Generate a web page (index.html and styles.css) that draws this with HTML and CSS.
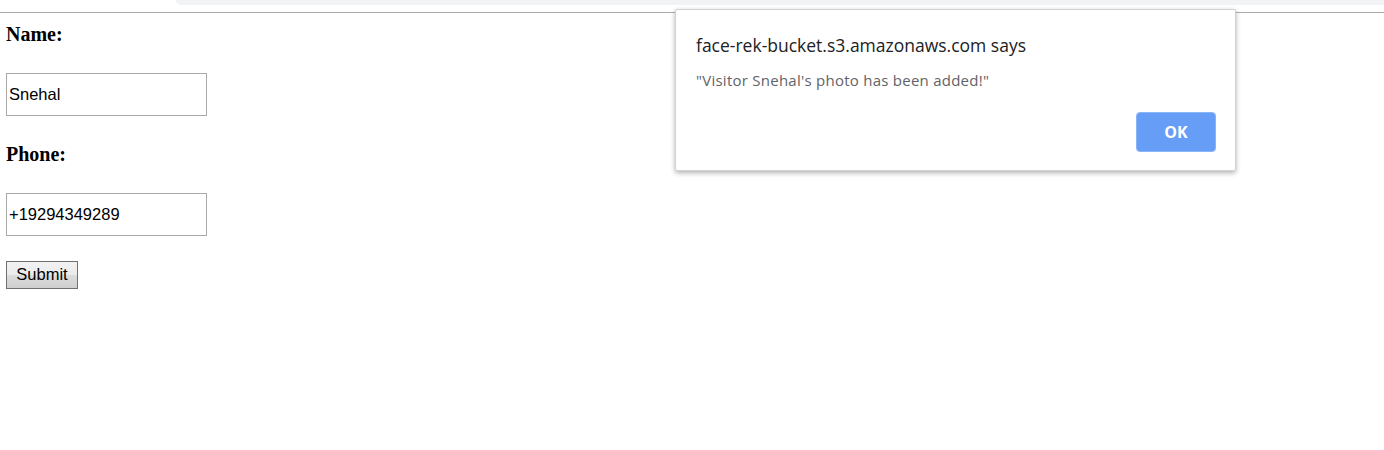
FILE: index.html
```html
<!DOCTYPE html>
<html>
<head>
<meta charset="utf-8">
<title>Visitor form</title>
<link rel="stylesheet" href="styles.css">
</head>
<body>
<div class="topbar"><div class="tabstrip"></div></div>
<form class="form">
  <h4 class="label label-name">Name:</h4>
  <input class="field" type="text" value="Snehal">
  <h4 class="label label-phone">Phone:</h4>
  <input class="field" type="text" value="+19294349289">
  <button class="submit" type="button">Submit</button>
</form>
<div class="dialog">
  <div class="dialog-title">face-rek-bucket.s3.amazonaws.com says</div>
  <div class="dialog-msg">"Visitor Snehal's photo has been added!"</div>
  <div class="dialog-actions"><button class="ok" type="button">OK</button></div>
</div>
</body>
</html>
```
FILE: styles.css
```css
html, body {
  margin: 0;
  padding: 0;
  background: #fff;
}
body {
  font-family: "Liberation Serif", serif;
  position: relative;
  width: 1384px;
  height: 450px;
  overflow: hidden;
}
.topbar {
  height: 12px;
  border-bottom: 1px solid #ababab;
}
.tabstrip {
  margin-left: 176px;
  height: 5px;
  background: #f1f3f4;
  border-bottom-left-radius: 10px;
}
.form {
  display: flex;
  flex-direction: column;
  align-items: flex-start;
  padding: 0 6px;
}
.label {
  margin: 0;
  font-size: 20px;
  line-height: 22px;
  font-weight: bold;
  color: #000;
}
.label-name { margin-top: 10px; }
.label-phone { margin-top: 27px; }
.field {
  margin: 28px 0 0;
  box-sizing: border-box;
  width: 201px;
  height: 43px;
  border: 1px solid #a9a9a9;
  padding: 0 2px;
  font-family: "Liberation Sans", Arial, sans-serif;
  font-size: 16.5px;
  color: #000;
  background: #fff;
  outline: none;
}
.submit {
  margin-top: 25px;
  box-sizing: border-box;
  width: 72px;
  height: 28px;
  padding: 0 0 1px;
  border: 1px solid #707070;
  border-radius: 0;
  background: linear-gradient(#f2f2f2, #ebebeb 50%, #dddddd 51%, #cfcfcf);
  font-family: "Liberation Sans", Arial, sans-serif;
  font-size: 16.5px;
  color: #000;
}
.dialog {
  position: absolute;
  left: 675px;
  top: 9px;
  width: 561px;
  height: 162px;
  box-sizing: border-box;
  background: #fff;
  border: 1px solid #d2d2d2;
  border-radius: 2px;
  box-shadow: 0 2px 5px rgba(0,0,0,0.3);
  padding: 23px 19px 0 20px;
  font-family: "Open Sans", "Noto Sans", sans-serif;
}
.dialog-title {
  font-size: 17.5px;
  line-height: 24px;
  color: #202124;
}
.dialog-msg {
  margin-top: 13px;
  font-size: 15px;
  letter-spacing: 0.25px;
  line-height: 20px;
  color: #5f6368;
}
.dialog-actions {
  display: flex;
  justify-content: flex-end;
  margin-top: 22px;
}
.ok {
  box-sizing: border-box;
  width: 80px;
  height: 40px;
  border: 1px solid #8ab4f8;
  border-radius: 4px;
  background: #669df6;
  color: #fff;
  font-family: "Open Sans", "Noto Sans", sans-serif;
  font-weight: bold;
  font-size: 16px;
  padding: 0;
}
```
